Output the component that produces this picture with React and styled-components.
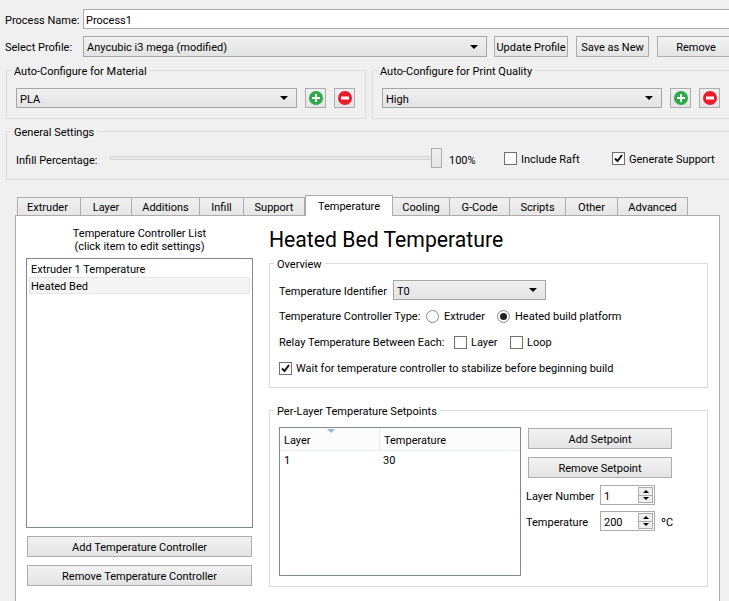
import styled, { createGlobalStyle } from "styled-components";

const Global = createGlobalStyle`
  html, body { margin: 0; padding: 0; background: #f0f0f0; overflow: hidden; }
  body { font-family: Roboto, "Open Sans", sans-serif; font-size: 11px; color: #000; }
  * { box-sizing: border-box; }
`;

const Page = styled.div`
  width: 735px;
  height: 601px;
  padding-top: 9px;
  overflow: hidden;
`;

const TopRow = styled.div`
  display: flex;
  align-items: center;
  padding-left: 5px;
  height: ${(p) => p.$h}px;
  margin-bottom: ${(p) => p.$mb || 0}px;
`;

const RowLabel = styled.span`
  flex: none;
  width: 78px;
  padding-top: 2px;
`;

const TextInput = styled.div`
  flex: 1;
  height: 100%;
  display: flex;
  align-items: center;
  padding: 2px 0 0 2px;
  background: #fff;
  border: 1px solid #ababab;
`;

const Combo = styled.div`
  flex: none;
  width: ${(p) => p.$w}px;
  height: ${(p) => p.$h || 20}px;
  display: flex;
  align-items: center;
  justify-content: space-between;
  padding: 2px 8px 0 3px;
  background: linear-gradient(#f0f0f0, #e3e3e3);
  border: 1px solid #a6a6a6;
`;

const Arrow = styled.span`
  width: 0;
  height: 0;
  margin-top: -2px;
  border-left: 4px solid transparent;
  border-right: 4px solid transparent;
  border-top: 4px solid #000;
`;

const Button = styled.div`
  flex: none;
  width: ${(p) => (p.$w ? `${p.$w}px` : "auto")};
  height: 21px;
  margin-left: ${(p) => p.$ml || 0}px;
  margin-top: ${(p) => p.$mt || 0}px;
  padding-top: 2px;
  display: flex;
  align-items: center;
  justify-content: center;
  background: linear-gradient(#f2f2f2, #e4e4e4);
  border: 1px solid #adadad;
  white-space: nowrap;
`;

const Group = styled.div`
  position: relative;
  height: ${(p) => p.$h}px;
  margin-top: ${(p) => p.$mt || 0}px;
  padding: ${(p) => p.$pt}px 0 0 9px;
  border: 1px solid #dcdcdc;
`;

const GroupTitle = styled.span`
  position: absolute;
  top: -7px;
  left: 4px;
  padding: 0 3px 0 3px;
  line-height: 15px;
  background: ${(p) => p.$bg || "#f0f0f0"};
`;

const ConfigRow = styled.div`
  display: grid;
  grid-template-columns: 360px 1fr;
  gap: 6px;
  margin: 13px 0 0 6px;
`;

const Line = styled.div`
  display: flex;
  align-items: center;
  height: ${(p) => p.$h || 20}px;
  white-space: nowrap;
`;

const IconButton = styled.div`
  flex: none;
  width: 21px;
  height: 20px;
  margin-left: 8px;
  display: flex;
  align-items: center;
  justify-content: center;
  background: linear-gradient(#f0f0f0, #e4e4e4);
  border: 1px solid #adadad;
`;

const General = styled(Group)`
  margin: 12px 0 0 6px;
`;

const Slider = styled.div`
  position: relative;
  flex: none;
  width: 332px;
  height: 4px;
  background: #e7e7e7;
  border: 1px solid #d6d6d6;
`;

const SliderHandle = styled.span`
  position: absolute;
  right: -1px;
  top: -9px;
  width: 11px;
  height: 20px;
  background: linear-gradient(#f0f0f0, #e4e4e4);
  border: 1px solid #adadad;
`;

const Box = styled.span`
  flex: none;
  width: 13px;
  height: 13px;
  display: flex;
  align-items: center;
  justify-content: center;
  margin-left: ${(p) => p.$ml || 0}px;
  margin-right: 4px;
  background: #fff;
  border: 1px solid #707070;
`;

const Round = styled(Box)`
  border-radius: 50%;
  border-color: #8a8a8a;
  margin-right: 5px;
  &::after {
    content: "";
    width: 7px;
    height: 7px;
    border-radius: 50%;
    background: ${(p) => (p.$on ? "#222" : "transparent")};
  }
`;

const FixedText = styled.span`
  flex: none;
  width: ${(p) => (p.$w ? `${p.$w}px` : "auto")};
  margin-left: ${(p) => p.$ml || 0}px;
  padding-top: ${(p) => p.$pt || 0}px;
`;

const TabBar = styled.div`
  display: flex;
  align-items: flex-end;
  height: 20px;
  margin: 15px 0 0 17px;
`;

const Tab = styled.div`
  position: relative;
  width: ${(p) => p.$w}px;
  height: ${(p) => (p.$on ? 21 : 18)}px;
  margin-bottom: ${(p) => (p.$on ? -1 : 0)}px;
  padding-top: ${(p) => (p.$on ? 0 : 1)}px;
  padding-right: ${(p) => (p.$first ? 3 : 0)}px;
  display: flex;
  align-items: center;
  justify-content: center;
  background: ${(p) => (p.$on ? "#fff" : "linear-gradient(#f0f0f0, #e6e6e6)")};
  border: 1px solid #acacac;
  border-left-width: ${(p) => (p.$first || p.$on ? 1 : 0)}px;
  border-bottom-width: 0;
  z-index: ${(p) => (p.$on ? 1 : 0)};
`;

const Pane = styled.div`
  display: grid;
  grid-template-columns: 227px 439px;
  gap: 16px;
  width: 705px;
  height: 400px;
  margin-left: 15px;
  padding: 10px 0 0 10px;
  background: #fff;
  border: 1px solid #acacac;
`;

const ListTitle = styled.div`
  text-align: center;
  line-height: 13px;
  padding-top: 1px;
  margin-bottom: 5px;
`;

const List = styled.div`
  height: 270px;
  padding: 1px 2px;
  border: 1px solid #828790;
`;

const ListItem = styled.div`
  height: 17px;
  display: flex;
  align-items: center;
  padding: 2px 0 0 1px;
  background: ${(p) => (p.$on ? "#f5f5f5" : "transparent")};
  border: 1px solid ${(p) => (p.$on ? "#e6e6e6" : "transparent")};
`;

const SideButtons = styled.div`
  display: flex;
  flex-direction: column;
  gap: 8px;
  margin: 8px 1px 0;
`;

const Heading = styled.h1`
  margin: 0 0 9px;
  font-size: 21.2px;
  font-weight: 400;
  line-height: 28px;
`;

const Rows = styled.div`
  display: flex;
  flex-direction: column;
  gap: 6px;
`;

const SetpointBody = styled.div`
  display: flex;
  gap: 7px;
`;

const Table = styled.div`
  flex: none;
  width: 242px;
  height: 149px;
  border: 1px solid #828790;
`;

const TableHead = styled.div`
  position: relative;
  display: grid;
  grid-template-columns: 99px 1fr;
  height: 23px;
  background: #fcfcfc;
  border-bottom: 1px solid #e5eefa;
  span { display: flex; align-items: center; padding: 2px 0 0 4px; }
  span + span { border-left: 1px solid #e5eefa; }
`;

const SortMark = styled.i`
  position: absolute;
  top: 1px;
  left: 47px;
  width: 0;
  height: 0;
  border-left: 4px solid transparent;
  border-right: 4px solid transparent;
  border-top: 4px solid #8fb9d8;
`;

const TableRow = styled.div`
  display: grid;
  grid-template-columns: 99px 1fr;
  height: 19px;
  align-items: center;
  span { padding-left: 4px; }
`;

const SetpointSide = styled.div`
  display: flex;
  flex-direction: column;
  padding-top: 1px;
`;

const SpinRow = styled.div`
  display: flex;
  align-items: center;
  height: 20px;
  margin: ${(p) => p.$mt}px 0 0 -2px;
`;

const Spin = styled.div`
  flex: none;
  width: 55px;
  height: 20px;
  display: flex;
  align-items: center;
  justify-content: space-between;
  padding: 1px 1px 1px 3px;
  background: #fff;
  border: 1px solid #ababab;
`;

const SpinValue = styled.span`
  padding-top: 2px;
`;

const SpinArrows = styled.div`
  width: 15px;
  height: 16px;
  display: flex;
  flex-direction: column;
  border: 1px solid #adadad;
  background: #eee;
  span {
    flex: 1;
    display: flex;
    align-items: center;
    justify-content: center;
  }
  span + span { border-top: 1px solid #adadad; }
`;

const Tri = styled.i`
  width: 0;
  height: 0;
  border-left: 3px solid transparent;
  border-right: 3px solid transparent;
  ${(p) => (p.$up ? "border-bottom: 3px solid #000;" : "border-top: 3px solid #000;")}
`;

const Check = () => (
  <svg width="11" height="11" viewBox="0 0 11 11">
    <path d="M2 5.5 L4.5 8 L9 2" fill="none" stroke="#111" strokeWidth="2" />
  </svg>
);

const PlusIcon = () => (
  <svg width="14" height="14" viewBox="0 0 14 14">
    <circle cx="7" cy="7" r="7" fill="#2eaa4a" />
    <path d="M6 3h2v3h3v2H8v3H6V8H3V6h3z" fill="#fff" />
  </svg>
);

const MinusIcon = () => (
  <svg width="14" height="14" viewBox="0 0 14 14">
    <circle cx="7" cy="7" r="7" fill="#ea1c2c" />
    <rect x="3" y="5.5" width="8" height="3" fill="#fff" />
  </svg>
);

const SpinBox = ({ value }) => (
  <Spin>
    <SpinValue>{value}</SpinValue>
    <SpinArrows>
      <span><Tri $up /></span>
      <span><Tri /></span>
    </SpinArrows>
  </Spin>
);

const tabs = [
  ["Extruder", 64], ["Layer", 51], ["Additions", 68], ["Infill", 44], ["Support", 61],
  ["Temperature", 88], ["Cooling", 57], ["G-Code", 60], ["Scripts", 56], ["Other", 52], ["Advanced", 70],
];

export default function App() {
  return (
    <Page>
      <Global />
      <TopRow $h={20} $mb={7}>
        <RowLabel>Process Name:</RowLabel>
        <TextInput>Process1</TextInput>
      </TopRow>
      <TopRow $h={21}>
        <RowLabel>Select Profile:</RowLabel>
        <Combo $w={404} $h={21}>Anycubic i3 mega (modified)<Arrow /></Combo>
        <Button $w={74} $ml={7}>Update Profile</Button>
        <Button $w={73} $ml={8}>Save as New</Button>
        <Button $w={78} $ml={8}>Remove</Button>
      </TopRow>

      <ConfigRow>
        <Group $h={49} $pt={17}>
          <GroupTitle>Auto-Configure for Material</GroupTitle>
          <Line>
            <Combo $w={281}>PLA<Arrow /></Combo>
            <IconButton><PlusIcon /></IconButton>
            <IconButton><MinusIcon /></IconButton>
          </Line>
        </Group>
        <Group $h={49} $pt={17}>
          <GroupTitle>Auto-Configure for Print Quality</GroupTitle>
          <Line>
            <Combo $w={280}>High<Arrow /></Combo>
            <IconButton><PlusIcon /></IconButton>
            <IconButton><MinusIcon /></IconButton>
          </Line>
        </Group>
      </ConfigRow>

      <General $h={49} $pt={16}>
        <GroupTitle>General Settings</GroupTitle>
        <Line>
          <FixedText $w={94} $pt={4}>Infill Percentage:</FixedText>
          <Slider><SliderHandle /></Slider>
          <FixedText $w={55} $ml={7} $pt={4}>100%</FixedText>
          <Box />
          <FixedText $w={91} $pt={2}>Include Raft</FixedText>
          <Box><Check /></Box>
          <FixedText $pt={2}>Generate Support</FixedText>
        </Line>
      </General>

      <TabBar>
        {tabs.map(([name, w], i) => (
          <Tab key={name} $w={w} $first={i === 0} $on={name === "Temperature"}>{name}</Tab>
        ))}
      </TabBar>
      <Pane>
        <div>
          <ListTitle>Temperature Controller List<br />(click item to edit settings)</ListTitle>
          <List>
            <ListItem>Extruder 1 Temperature</ListItem>
            <ListItem $on>Heated Bed</ListItem>
          </List>
          <SideButtons>
            <Button>Add Temperature Controller</Button>
            <Button>Remove Temperature Controller</Button>
          </SideButtons>
        </div>
        <div>
          <Heading>Heated Bed Temperature</Heading>
          <Group $h={125} $pt={16}>
            <GroupTitle $bg="#fff">Overview</GroupTitle>
            <Rows>
              <Line>
                <FixedText $w={114} $pt={2}>Temperature Identifier</FixedText>
                <Combo $w={153}>T0<Arrow /></Combo>
              </Line>
              <Line>
                <FixedText $w={147} $pt={1}>Temperature Controller Type:</FixedText>
                <Round />
                <FixedText $w={53}>Extruder</FixedText>
                <Round $on />
                Heated build platform
              </Line>
              <Line>
                <FixedText $w={175}>Relay Temperature Between Each:</FixedText>
                <Box />
                <FixedText $w={39}>Layer</FixedText>
                <Box />
                Loop
              </Line>
              <Line>
                <Box><Check /></Box>
                Wait for temperature controller to stabilize before beginning build
              </Line>
            </Rows>
          </Group>
          <Group $h={177} $pt={16} $mt={22}>
            <GroupTitle $bg="#fff">Per-Layer Temperature Setpoints</GroupTitle>
            <SetpointBody>
              <Table>
                <TableHead>
                  <span>Layer</span>
                  <span>Temperature</span>
                  <SortMark />
                </TableHead>
                <TableRow>
                  <span>1</span>
                  <span>30</span>
                </TableRow>
              </Table>
              <SetpointSide>
                <Button $w={144}>Add Setpoint</Button>
                <Button $w={144} $mt={8}>Remove Setpoint</Button>
                <SpinRow $mt={7}>
                  <FixedText $w={74} $pt={2}>Layer Number</FixedText>
                  <SpinBox value="1" />
                </SpinRow>
                <SpinRow $mt={6}>
                  <FixedText $w={74} $pt={2}>Temperature</FixedText>
                  <SpinBox value="200" />
                  <FixedText $w={20} $ml={6} $pt={2}>ºC</FixedText>
                </SpinRow>
              </SetpointSide>
            </SetpointBody>
          </Group>
        </div>
      </Pane>
    </Page>
  );
}
